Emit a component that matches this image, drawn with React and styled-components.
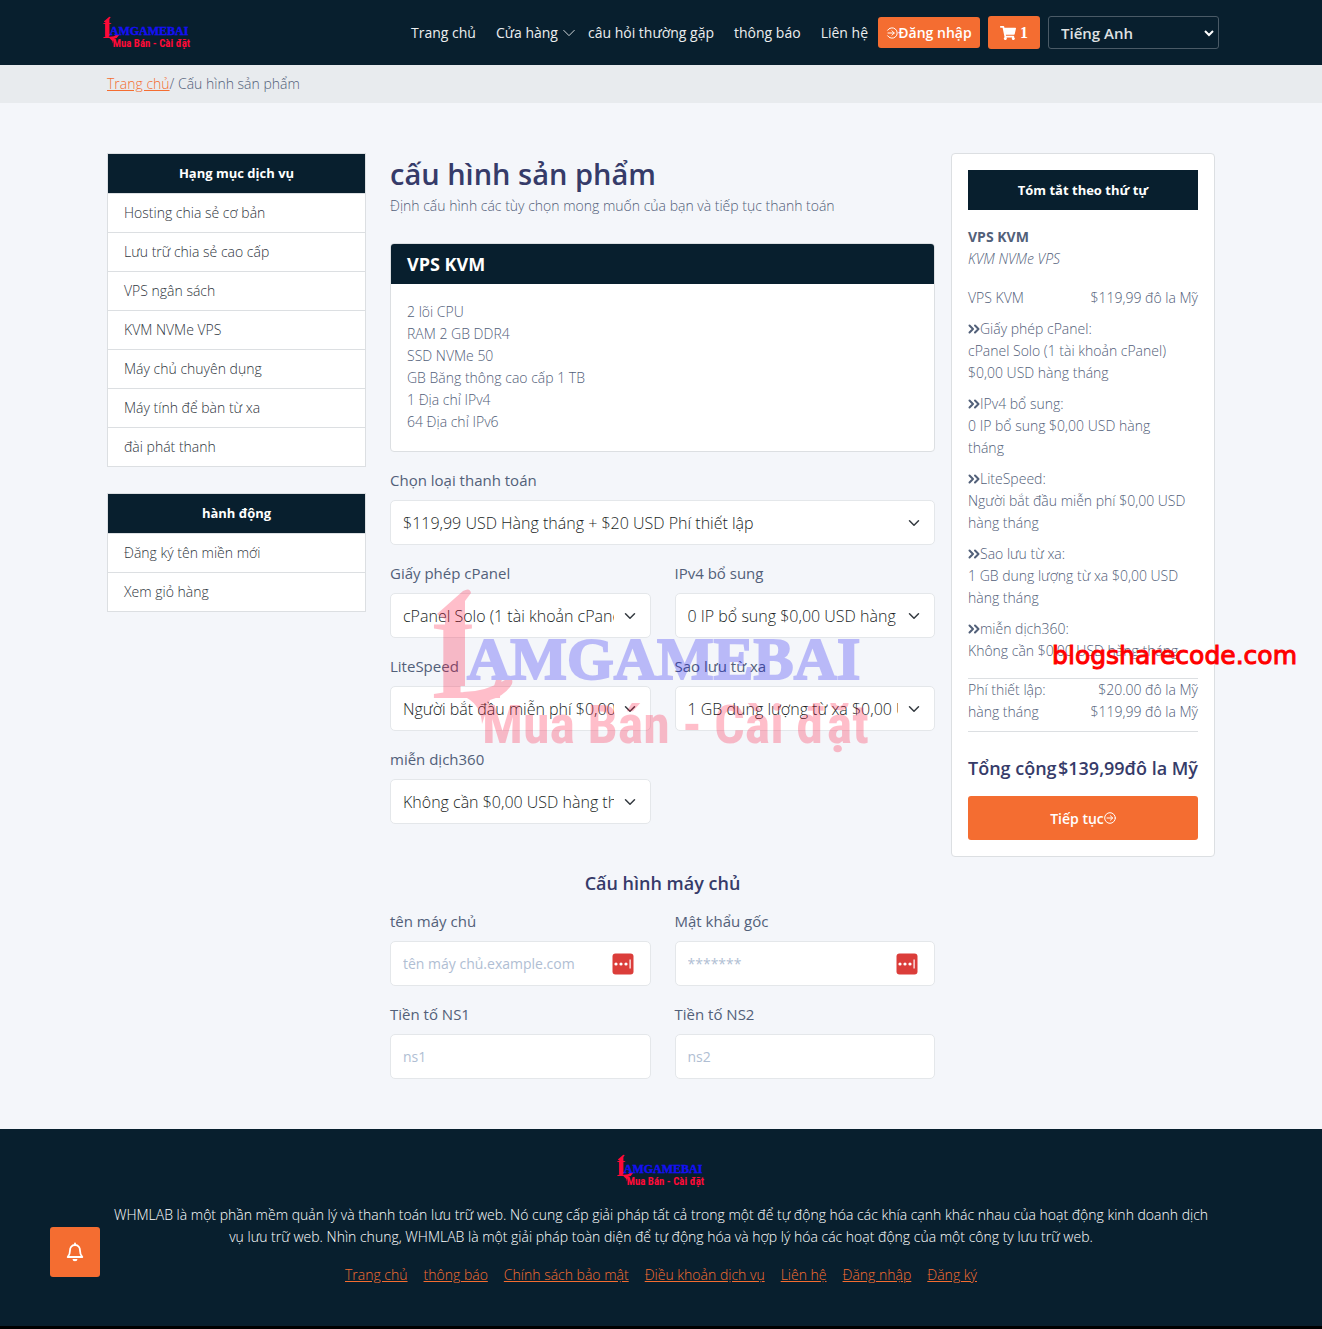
import React from 'react';
import styled, { createGlobalStyle } from 'styled-components';
import { FaShoppingCart } from 'react-icons/fa';

const navy = '#081f2e';
const orange = '#f46d31';
const slate = '#526079';
const line = '#dcdfe2';

const GlobalStyle = createGlobalStyle`
  *, *::before, *::after { box-sizing: border-box; }
  body {
    margin: 0;
    background: #f4f6fa;
    color: ${slate};
    font-family: "Open Sans", "Noto Sans", sans-serif;
    font-size: 14px;
    font-weight: 300;
    line-height: 22px;
  }
  h1, h2, h3, p, ul, dl, dd { margin: 0; padding: 0; }
  ul { list-style: none; }
  button, input, select { font-family: inherit; margin: 0; }
`;

const Page = styled.div`
  position: relative;
`;

const Container = styled.div`
  max-width: ${(p) => (p.$wide ? '1116px' : '1108px')};
  margin: 0 auto;
`;

/* ---------- header ---------- */

const Header = styled.header`
  background: ${navy};
`;

const HeaderBar = styled(Container)`
  display: flex;
  align-items: center;
  justify-content: space-between;
  height: 65px;
`;

const HomeLink = styled.a`
  display: flex;
`;

const LogoSvg = styled.svg`
  display: block;
  width: 88px;
  height: 34px;
  overflow: visible;
`;

const HeaderRight = styled.div`
  display: flex;
  align-items: center;
  gap: 8px;
`;

const Nav = styled.nav`
  display: flex;
  align-items: center;
  gap: 20px;
  margin-right: 2px;
`;

const NavLink = styled.a`
  display: flex;
  align-items: center;
  gap: 4px;
  margin-right: ${(p) => (p.$menu ? '-8px' : '0')};
  color: #eceeef;
  font-weight: 500;
  font-size: 14px;
  text-decoration: none;
  white-space: nowrap;
`;

const Button = styled.button`
  display: flex;
  align-items: center;
  justify-content: center;
  gap: ${(p) => p.$gap || '0'};
  width: ${(p) => p.$width || 'auto'};
  height: ${(p) => p.$height || '31px'};
  padding: 0 8px;
  border: 0;
  border-radius: 3px;
  background: ${orange};
  color: #fff;
  font-size: 14px;
  font-weight: 600;
  white-space: nowrap;
  cursor: pointer;
`;

const CartCount = styled.span`
  font-family: "Liberation Serif", serif;
  font-size: 16px;
  font-weight: 700;
`;

const LanguageBox = styled.div`
  display: grid;
  align-items: center;
  width: 171px;
  & > * { grid-area: 1 / 1; }
  & > svg { justify-self: end; margin-right: 5px; pointer-events: none; }
`;

const LanguageSelect = styled.select`
  appearance: none;
  width: 100%;
  height: 33px;
  padding: 0 12px;
  border: 1px solid #4a5a66;
  border-radius: 3px;
  background: transparent;
  color: #dfe1e2;
  font-size: 15px;
  font-weight: 600;
`;

/* ---------- breadcrumb ---------- */

const Breadcrumb = styled.nav`
  padding: 8px 0;
  background: #e8ebee;
`;

const TextLink = styled.a`
  color: ${orange};
  text-decoration: underline;
`;

/* ---------- main columns ---------- */

const Main = styled.main`
  padding: 50px 0;
`;

const Columns = styled(Container)`
  display: grid;
  grid-template-columns: 259px minmax(0, 1fr);
  gap: 24px;
  align-items: start;
`;

const Content = styled.div`
  display: grid;
  grid-template-columns: minmax(0, 1fr) 264px;
  gap: 16px;
  align-items: start;
`;

const Sidebar = styled.aside`
  display: grid;
  gap: 26px;
`;

const MenuCard = styled.section`
  border: 1px solid ${line};
  background: #fff;
`;

const MenuTitle = styled.h2`
  padding: 8px 16px 9px;
  background: ${navy};
  color: #fff;
  font-size: 13px;
  font-weight: 700;
  line-height: 22px;
  text-align: center;
`;

const MenuLink = styled.a`
  display: block;
  padding: 8px 16px;
  border-top: 1px solid ${line};
  color: #2f3640;
  text-decoration: none;
`;

/* ---------- product form ---------- */

const Title = styled.h1`
  color: #363b69;
  font-size: 29px;
  font-weight: 600;
  line-height: 42px;
`;

const ProductCard = styled.section`
  margin: 26px 0 17px;
  border: 1px solid ${line};
  border-radius: 4px;
  background: #fff;
  overflow: hidden;
`;

const ProductName = styled.h2`
  padding: 8px 16px;
  background: ${navy};
  color: #fff;
  font-size: 18px;
  font-weight: 700;
  line-height: 24px;
`;

const SpecList = styled.ul`
  padding: 17px 16px 18px;
`;

const Fields = styled.div`
  display: grid;
  grid-template-columns: repeat(2, minmax(0, 1fr));
  gap: 17px 24px;
`;

const FieldBox = styled.div`
  display: grid;
  gap: 9px;
  grid-column: ${(p) => (p.$full ? '1 / -1' : 'auto')};
`;

const Label = styled.label`
  color: ${slate};
  font-size: 15px;
  font-weight: 500;
`;

const Control = styled.div`
  display: grid;
  align-items: center;
  & > * { grid-area: 1 / 1; }
  & > svg { justify-self: end; margin-right: ${(p) => p.$icon || '13px'}; pointer-events: none; }
`;

const Select = styled.select`
  appearance: none;
  width: 100%;
  height: 45px;
  padding: 0 36px 0 12px;
  border: 1px solid #e4e7ea;
  border-radius: 5px;
  background: #fff;
  color: #1b1f26;
  font-size: 16px;
  font-weight: 300;
`;

const Input = styled.input`
  width: 100%;
  height: 45px;
  padding: 0 48px 0 12px;
  border: 1px solid #e4e7ea;
  border-radius: 5px;
  background: #fff;
  color: #1b1f26;
  font-size: 14px;
  font-weight: 400;
  &::placeholder { color: #b0bed3; opacity: 1; }
`;

const SectionTitle = styled.h2`
  margin: 48px 0 16px;
  color: #363b69;
  font-size: 18px;
  font-weight: 600;
  line-height: 22px;
  text-align: center;
`;

/* ---------- order summary ---------- */

const Summary = styled.aside`
  padding: 16px;
  border: 1px solid ${line};
  border-radius: 4px;
  background: #fff;
`;

const SummaryTitle = styled.h2`
  padding: 9px 16px;
  background: ${navy};
  color: #fff;
  font-size: 13px;
  font-weight: 700;
  line-height: 22px;
  text-align: center;
`;

const SummaryProduct = styled.p`
  padding: 16px 0 17px;
  & > strong { display: block; font-weight: 700; }
`;

const PriceRow = styled.div`
  display: flex;
  justify-content: space-between;
  white-space: nowrap;
`;

const OptionList = styled.dl`
  display: grid;
  gap: 9px;
  padding: 9px 0 16px;
`;

const OptionName = styled.dt`
  display: flex;
  align-items: center;
`;

const OptionValue = styled.dd`
  && { padding-right: 10px; }
`;

const Charges = styled.div`
  padding-bottom: 8px;
  border-top: 1px solid ${line};
  border-bottom: 1px solid ${line};
`;

const Total = styled(PriceRow)`
  margin: 25px 0 17px;
  color: #363b69;
  font-size: 18px;
  font-weight: 600;
`;

/* ---------- footer ---------- */

const Footer = styled.footer`
  padding: 25px 0 40px;
  border-bottom: 3px solid #000;
  background: ${navy};
  color: #fff;
  text-align: center;
`;

const FooterInner = styled(Container)`
  display: grid;
  justify-items: center;
  gap: 16px;
`;

const FooterText = styled.p`
  && { padding: 0 4px; }
`;

const FooterLinks = styled.nav`
  display: flex;
  flex-wrap: wrap;
  justify-content: center;
  gap: 16px;
`;

/* ---------- overlays ---------- */

const Watermark = styled.div`
  position: absolute;
  top: 586px;
  left: calc(50% - 228px);
  opacity: 0.26;
  pointer-events: none;
  & > svg { width: 440px; height: 170px; }
`;

const SiteMark = styled.div`
  position: absolute;
  top: 641px;
  right: 25px;
  color: #f00;
  font-family: "DejaVu Sans", sans-serif;
  font-size: 25px;
  font-weight: 500;
  line-height: 30px;
  -webkit-text-stroke: 1px #f00;
  pointer-events: none;
`;

const BellButton = styled.button`
  position: fixed;
  left: 50px;
  bottom: 52px;
  display: grid;
  place-items: center;
  width: 50px;
  height: 50px;
  padding: 0;
  border: 0;
  border-radius: 3px;
  background: ${orange};
  color: #fff;
  cursor: pointer;
`;

/* ---------- drawings ---------- */

const Logo = () => (
  <LogoSvg viewBox="0 0 440 170" role="img" aria-label="Lamgamebai">
    <g fill="#ff0a37">
      <path d="M4 28 L30 5 Q37 1 38 7 L32 15 V100 H12 V33 Q7 31 4 28Z" />
      <text x="-1" y="112" fontFamily="Liberation Serif, serif" fontWeight="700" fontSize="112">L</text>
      <path d="M30 106 Q52 106 72 94 Q81 90 79 98 Q72 110 57 114 L49 138 Q48 120 34 112Z" />
    </g>
    <text x="34" y="93" fill="#1410f5" stroke="#1410f5" strokeWidth="2" fontFamily="Liberation Serif, serif" fontWeight="700" fontSize="60">AMGAMEBAI</text>
    <text x="49" y="157" fill="#ff0a37" fontFamily="Roboto Condensed, Roboto, sans-serif" fontWeight="700" fontSize="54">Mua Bán - Cài đặt</text>
  </LogoSvg>
);

const Chevron = ({ width = 16, height = 16, stroke = 2 }) => (
  <svg width={width} height={height} viewBox="0 0 16 16" fill="none" stroke="currentColor" strokeWidth={stroke} strokeLinecap="round" strokeLinejoin="round" aria-hidden="true">
    <path d="m2 5 6 6 6-6" />
  </svg>
);

const SelectChevron = () => (
  <svg width="16" height="12" viewBox="0 0 16 16" fill="none" stroke="#343a40" strokeWidth="2" strokeLinecap="round" strokeLinejoin="round" aria-hidden="true">
    <path d="m2 5 6 6 6-6" />
  </svg>
);

const ArrowCircle = () => (
  <svg width="12" height="12" viewBox="0 0 12 12" fill="none" stroke="currentColor" strokeLinecap="round" strokeLinejoin="round" aria-hidden="true">
    <circle cx="6" cy="6" r="5.3" />
    <path d="M3 6h5.6M6.4 3.8 8.7 6 6.4 8.2" />
  </svg>
);

const LoginIcon = () => (
  <svg width="12" height="12" viewBox="0 0 12 12" fill="none" stroke="currentColor" strokeLinecap="round" strokeLinejoin="round" aria-hidden="true">
    <path d="M1.6 3.2a5.2 5.2 0 1 1 0 5.6M2 6h6.200M6 3.8 8.2 6 6 8.2" />
  </svg>
);

const DoubleAngle = () => (
  <svg width="12" height="12" viewBox="0 0 12 12" fill="none" stroke={slate} strokeWidth="2" strokeLinecap="round" strokeLinejoin="round" aria-hidden="true">
    <path d="M1.5 2.5 5 6 1.5 9.500M7 2.500 10.500 6 7 9.500" />
  </svg>
);

const PasswordBadge = () => (
  <svg width="22" height="22" viewBox="0 0 22 22" aria-hidden="true">
    <rect x="0.500" y="0.500" width="21" height="21" rx="3" fill="#db3d3a" />
    <g fill="#fff">
      <circle cx="4" cy="11" r="1.600" />
      <circle cx="9" cy="11" r="1.600" />
      <circle cx="14" cy="11" r="1.600" />
      <rect x="17.500" y="6.500" width="1.200" height="9" />
    </g>
  </svg>
);

const BellIcon = () => (
  <svg width="18" height="20" viewBox="0 0 18 20" fill="none" stroke="currentColor" strokeWidth="1.800" strokeLinejoin="round" aria-hidden="true">
    <path d="M9 3C5.500 3 4 5.800 4 8.500c0 4-1.300 5.200-2.300 6.500h14.600c-1-1.300-2.300-2.500-2.300-6.500C14 5.800 12.500 3 9 3Z" />
    <path d="M9 3V1.500" strokeLinecap="round" />
    <path d="M6.500 17h5a2.500 2.300 0 0 1-5 0Z" fill="currentColor" stroke="none" />
  </svg>
);

/* ---------- data ---------- */

const categories = ['Hosting chia sẻ cơ bản', 'Lưu trữ chia sẻ cao cấp', 'VPS ngân sách', 'KVM NVMe VPS', 'Máy chủ chuyên dụng', 'Máy tính để bàn từ xa', 'đài phát thanh'];
const actions = ['Đăng ký tên miền mới', 'Xem giỏ hàng'];
const specs = ['2 lõi CPU', 'RAM 2 GB DDR4', 'SSD NVMe 50', 'GB Băng thông cao cấp 1 TB', '1 Địa chỉ IPv4', '64 Địa chỉ IPv6'];
const options = [
  { id: 'billing', label: 'Chọn loại thanh toán', value: '$119,99 USD Hàng tháng + $20 USD Phí thiết lập', full: true },
  { id: 'cpanel', label: 'Giấy phép cPanel', value: 'cPanel Solo (1 tài khoản cPanel) $0,00 USD hàng tháng' },
  { id: 'ipv4', label: 'IPv4 bổ sung', value: '0 IP bổ sung $0,00 USD hàng tháng' },
  { id: 'litespeed', label: 'LiteSpeed', value: 'Người bắt đầu miễn phí $0,00 USD hàng tháng' },
  { id: 'backup', label: 'Sao lưu từ xa', value: '1 GB dung lượng từ xa $0,00 USD hàng tháng' },
  { id: 'imunify', label: 'miễn dịch360', value: 'Không cần $0,00 USD hàng tháng' },
];
const serverFields = [
  { id: 'hostname', label: 'tên máy chủ', placeholder: 'tên máy chủ.example.com', badge: true },
  { id: 'password', label: 'Mật khẩu gốc', placeholder: '*******', type: 'password', badge: true },
  { id: 'ns1', label: 'Tiền tố NS1', placeholder: 'ns1' },
  { id: 'ns2', label: 'Tiền tố NS2', placeholder: 'ns2' },
];
const chosen = options.slice(1);
const footerLinks = ['Trang chủ', 'thông báo', 'Chính sách bảo mật', 'Điều khoản dịch vụ', 'Liên hệ', 'Đăng nhập', 'Đăng ký'];

/* ---------- composed parts ---------- */

const Menu = ({ title, items }) => (
  <MenuCard>
    <MenuTitle>{title}</MenuTitle>
    <ul>
      {items.map((item) => (
        <li key={item}><MenuLink href="#">{item}</MenuLink></li>
      ))}
    </ul>
  </MenuCard>
);

const SelectField = ({ id, label, value, full }) => (
  <FieldBox $full={full}>
    <Label htmlFor={id}>{label}</Label>
    <Control>
      <Select id={id}><option>{value}</option></Select>
      <SelectChevron />
    </Control>
  </FieldBox>
);

const TextField = ({ id, label, placeholder, type = 'text', badge }) => (
  <FieldBox>
    <Label htmlFor={id}>{label}</Label>
    <Control $icon="17px">
      <Input id={id} type={type} placeholder={placeholder} />
      {badge && <PasswordBadge />}
    </Control>
  </FieldBox>
);

export default function App() {
  return (
    <Page>
      <GlobalStyle />
      <Header>
        <HeaderBar $wide>
          <HomeLink href="#"><Logo /></HomeLink>
          <HeaderRight>
            <Nav>
              <NavLink href="#">Trang chủ</NavLink>
              <NavLink href="#" $menu>Cửa hàng <Chevron width={14} height={14} stroke={1} /></NavLink>
              <NavLink href="#">câu hỏi thường gặp</NavLink>
              <NavLink href="#">thông báo</NavLink>
              <NavLink href="#">Liên hệ</NavLink>
            </Nav>
            <Button type="button" $width="102px"><LoginIcon />Đăng nhập</Button>
            <Button type="button" $width="52px" $height="33px" $gap="4px">
              <FaShoppingCart size={16} aria-hidden="true" /><CartCount>1</CartCount>
            </Button>
            <LanguageBox>
              <LanguageSelect aria-label="Ngôn ngữ"><option>Tiếng Anh</option></LanguageSelect>
              <svg width="10" height="10" viewBox="0 0 10 10" fill="none" stroke="#fff" strokeWidth="2" aria-hidden="true"><path d="m1 3 4 4 4-4" /></svg>
            </LanguageBox>
          </HeaderRight>
        </HeaderBar>
      </Header>

      <Breadcrumb>
        <Container><TextLink href="#">Trang chủ</TextLink>/ Cấu hình sản phẩm</Container>
      </Breadcrumb>

      <Main>
        <Columns>
          <Sidebar>
            <Menu title="Hạng mục dịch vụ" items={categories} />
            <Menu title="hành động" items={actions} />
          </Sidebar>
          <Content>
            <form>
              <Title>cấu hình sản phẩm</Title>
              <p>Định cấu hình các tùy chọn mong muốn của bạn và tiếp tục thanh toán</p>
              <ProductCard>
                <ProductName>VPS KVM</ProductName>
                <SpecList>{specs.map((s) => <li key={s}>{s}</li>)}</SpecList>
              </ProductCard>
              <Fields>{options.map((o) => <SelectField key={o.id} {...o} />)}</Fields>
              <SectionTitle>Cấu hình máy chủ</SectionTitle>
              <Fields>{serverFields.map((f) => <TextField key={f.id} {...f} />)}</Fields>
            </form>
            <Summary>
              <SummaryTitle>Tóm tắt theo thứ tự</SummaryTitle>
              <SummaryProduct><strong>VPS KVM</strong><em>KVM NVMe VPS</em></SummaryProduct>
              <PriceRow><span>VPS KVM</span><span>$119,99 đô la Mỹ</span></PriceRow>
              <OptionList>
                {chosen.map((o) => (
                  <div key={o.id}>
                    <OptionName><DoubleAngle />{o.label}:</OptionName>
                    <OptionValue>{o.value}</OptionValue>
                  </div>
                ))}
              </OptionList>
              <Charges>
                <PriceRow><span>Phí thiết lập:</span><span>$20.00 đô la Mỹ</span></PriceRow>
                <PriceRow><span>hàng tháng</span><span>$119,99 đô la Mỹ</span></PriceRow>
              </Charges>
              <Total><span>Tổng cộng</span><span>$139,99đô la Mỹ</span></Total>
              <Button type="button" $width="100%" $height="44px">Tiếp tục<ArrowCircle /></Button>
            </Summary>
          </Content>
        </Columns>
      </Main>

      <Footer>
        <FooterInner $wide>
          <Logo />
          <FooterText>WHMLAB là một phần mềm quản lý và thanh toán lưu trữ web. Nó cung cấp giải pháp tất cả trong một để tự động hóa các khía cạnh khác nhau của hoạt động kinh doanh dịch vụ lưu trữ web. Nhìn chung, WHMLAB là một giải pháp toàn diện để tự động hóa và hợp lý hóa các hoạt động của một công ty lưu trữ web.</FooterText>
          <FooterLinks>{footerLinks.map((l) => <TextLink key={l} href="#">{l}</TextLink>)}</FooterLinks>
        </FooterInner>
      </Footer>

      <Watermark aria-hidden="true"><Logo /></Watermark>
      <SiteMark>blogsharecode.com</SiteMark>
      <BellButton type="button" aria-label="Thông báo"><BellIcon /></BellButton>
    </Page>
  );
}
